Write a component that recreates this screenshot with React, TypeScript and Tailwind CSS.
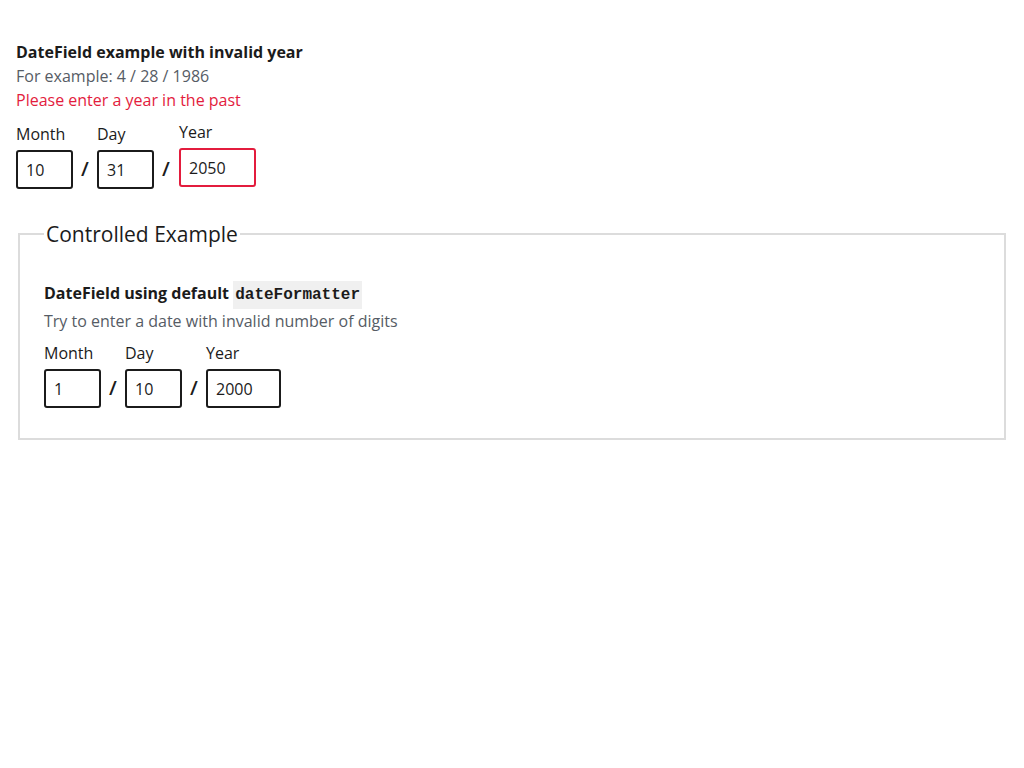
import React from 'react';

interface DatePartProps {
  label: string;
  value: string;
  width: string;
  error?: boolean;
}

const DatePart: React.FC<DatePartProps> = ({ label, value, width, error }) => (
  <div className={`flex flex-col ${error ? '-mt-[2px] ml-px' : ''}`}>
    <label className="text-base leading-6 text-[#1b1b1b]">{label}</label>
    <input
      readOnly
      value={value}
      className={`mt-1 h-[39px] ${width} rounded-[3px] border-2 px-2 text-base text-[#1b1b1b] outline-none ${
        error ? 'border-[#e31c3d]' : 'border-[#1b1b1b]'
      }`}
    />
  </div>
);

const Slash = () => (
  <span className="mx-2 mb-[6px] w-2 self-end text-center text-xl font-semibold leading-7 text-[#1b1b1b]">/</span>
);

interface DateFieldProps {
  month: string;
  day: string;
  year: string;
  yearError?: boolean;
}

const DateField: React.FC<DateFieldProps> = ({ month, day, year, yearError }) => (
  <div className="flex items-start">
    <DatePart label="Month" value={month} width="w-[57px]" />
    <Slash />
    <DatePart label="Day" value={day} width="w-[57px]" />
    <Slash />
    <DatePart label="Year" value={year} width={yearError ? 'w-[77px]' : 'w-[75px]'} error={yearError} />
  </div>
);

export default function App() {
  return (
    <div className="min-h-screen bg-white pt-10 font-['Open_Sans',sans-serif] text-[#1b1b1b]">
      <section className="px-4">
        <h3 className="text-base font-bold leading-6">DateField example with invalid year</h3>
        <p className="text-base leading-6 text-[#565c65]">For example: 4 / 28 / 1986</p>
        <p className="text-base leading-6 text-[#e31c3d]">Please enter a year in the past</p>
        <div className="mt-[10px]">
          <DateField month="10" day="31" year="2050" yearError />
        </div>
      </section>

      <fieldset className="mx-[18px] mt-[30px] border-2 border-[#dcdcdc] px-6 pb-[30px]">
        <legend className="px-0.5 text-[21px] leading-[30px]">Controlled Example</legend>
        <div className="pt-[30px]">
          <h3 className="text-base font-bold leading-7">
            DateField using default{' '}
            <code className="inline-block bg-[#f0f0f0] px-0.5 font-['Liberation_Mono',monospace] font-bold">
              dateFormatter
            </code>
          </h3>
          <p className="text-base leading-6 text-[#565c65]">Try to enter a date with invalid number of digits</p>
          <div className="mt-2">
            <DateField month="1" day="10" year="2000" />
          </div>
        </div>
      </fieldset>
    </div>
  );
}
